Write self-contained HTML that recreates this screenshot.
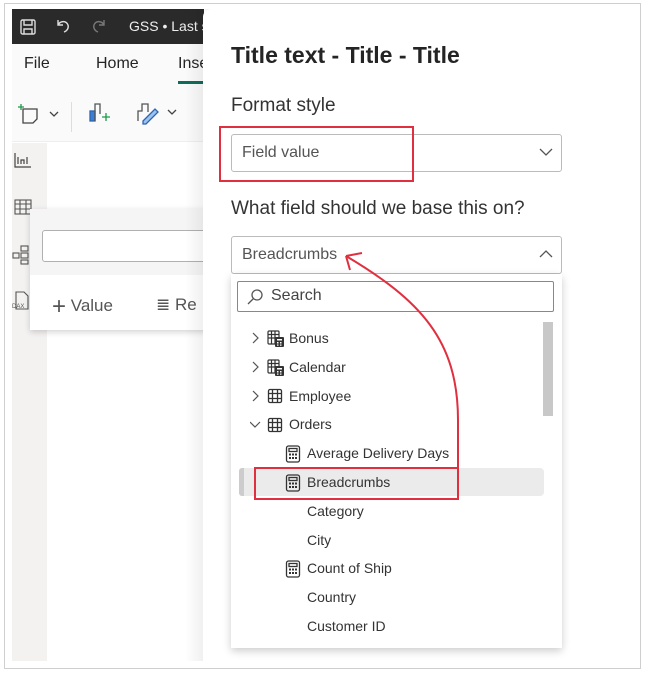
<!DOCTYPE html>
<html><head><meta charset="utf-8"><style>
*{box-sizing:border-box;margin:0;padding:0}
body{width:645px;height:673px;background:#fff;position:relative;overflow:hidden;font-family:"Segoe UI","Liberation Sans",sans-serif;color:#242424}
.a{position:absolute}
.t{white-space:nowrap}
</style></head><body>
<svg width="0" height="0" style="position:absolute"><defs>
<symbol id="calc" viewBox="0 0 16 18"><g fill="none" stroke="#333" stroke-width="1.3"><rect x="1.5" y="1" width="13" height="16" rx="2"/><rect x="4" y="3.5" width="8" height="3"/></g><g fill="#333"><rect x="4" y="8.5" width="2" height="2"/><rect x="7" y="8.5" width="2" height="2"/><rect x="10" y="8.5" width="2" height="2"/><rect x="4" y="12" width="2" height="2"/><rect x="7" y="12" width="2" height="2"/><rect x="10" y="12" width="2" height="2"/></g></symbol>
<symbol id="tbl" viewBox="0 0 16 16"><g fill="none" stroke="#333" stroke-width="1.3"><rect x="1.5" y="1.5" width="13" height="13" rx="1.5"/><path d="M1.5 5.5h13M5.5 1.5v13M10.5 1.5v13M1.5 10.5h13"/></g></symbol>
<symbol id="ctbl" viewBox="0 0 18 18"><g fill="none" stroke="#333" stroke-width="1.2"><rect x="1" y="1" width="11" height="13" rx="1"/><path d="M1 4.5h11M4.5 1v13M8 1v13M1 8h11"/></g><rect x="8" y="7" width="9" height="10" rx="1" fill="#333"/><g fill="#fff"><rect x="10" y="9" width="5" height="1.5"/><rect x="10" y="12" width="1.5" height="1.5"/><rect x="13" y="12" width="1.5" height="1.5"/><rect x="10" y="14.5" width="1.5" height="1.2"/><rect x="13" y="14.5" width="1.5" height="1.2"/></g></symbol>
</defs></svg>
<div class="a" style="left:4px;top:3px;width:637px;height:666px;border:1px solid #cfcfcf"></div>
<div class="a" style="left:12px;top:9px;width:192px;height:652px;background:#fff;overflow:hidden">
  <div class="a" style="left:0;top:0;width:192px;height:35px;background:#2a2a2a"></div>
  <svg class="a" style="left:6px;top:8px" width="20" height="20" viewBox="0 0 20 20" fill="none" stroke="#ddd" stroke-width="1.4"><rect x="3" y="3" width="14" height="14" rx="1.5"/><path d="M6 3v5h8V3M6 17v-5h8v5"/></svg>
  <svg class="a" style="left:42px;top:8px" width="18" height="18" viewBox="0 0 18 18" fill="none" stroke="#ddd" stroke-width="1.4"><path d="M4 3v5h5M4 8c2-4 8-5 10 0 1 3-1 6-4 7"/></svg>
  <svg class="a" style="left:78px;top:8px" width="18" height="18" viewBox="0 0 18 18" fill="none" stroke="#777" stroke-width="1.4"><path d="M14 3v5H9M14 8c-2-4-8-5-10 0-1 3 1 6 4 7"/></svg>
  <div class="a t" style="left:117px;top:9px;font-size:14px;color:#eee">GSS • Last s</div>
  <div class="a" style="left:0;top:35px;width:192px;height:46px;background:#fafafa"></div>
  <div class="a t" style="left:12px;top:46px;font-size:16px">File</div>
  <div class="a t" style="left:84px;top:46px;font-size:16px">Home</div>
  <div class="a t" style="left:166px;top:46px;font-size:16px">Inse</div>
  <div class="a" style="left:166px;top:72px;width:30px;height:3px;background:#0f6c5a"></div>
  <div class="a" style="left:0;top:81px;width:192px;height:52px;background:#fafafa;border-bottom:1px solid #eee"></div>
  <svg class="a" style="left:6px;top:94px" width="50" height="22" viewBox="0 0 50 22" fill="none" stroke-width="1.3"><path d="M5 6h14v10l-4 4H5z" stroke="#444"/><path d="M3 1v6M0 4h6" stroke="#1a9b4b"/><path d="M32 9l4 4 4-4" stroke="#444"/></svg>
  <div class="a" style="left:59px;top:93px;width:1px;height:30px;background:#ddd"></div>
  <svg class="a" style="left:75px;top:92px" width="30" height="24" viewBox="0 0 30 24" fill="none" stroke-width="1.3"><rect x="3" y="10" width="5" height="10" fill="#3b7fd6" stroke="#2d65b0"/><path d="M8 20V3h5v10" stroke="#555"/><path d="M15 16h8M19 12v8" stroke="#1a9b4b"/></svg>
  <svg class="a" style="left:122px;top:92px" width="46" height="24" viewBox="0 0 46 24" fill="none" stroke-width="1.3"><path d="M4 20V10h4V3h6v8" stroke="#555"/><path d="M9 20l12-12 3 3-12 12H9z" fill="#9cc3ee" stroke="#2d65b0"/><path d="M34 9l4 4 4-4" stroke="#444"/></svg>
  <div class="a" style="left:0;top:134px;width:35px;height:518px;background:#f3f2f1"></div>
  <svg class="a" style="left:2px;top:143px" width="18" height="16" viewBox="0 0 18 16" fill="none" stroke="#444" stroke-width="1.2"><path d="M1 1v14h16M4 12V5M7 12V8h3v4M13 12V5"/></svg>
  <svg class="a" style="left:2px;top:190px" width="18" height="16" viewBox="0 0 18 16" fill="none" stroke="#555" stroke-width="1.1"><rect x="1" y="1" width="16" height="14"/><path d="M1 5h16M1 10h16M6 1v14M12 1v14"/></svg>
  <svg class="a" style="left:0px;top:236px" width="18" height="20" viewBox="0 0 18 20" fill="none" stroke="#555" stroke-width="1.1"><rect x="9" y="1" width="7" height="5"/><rect x="9" y="8" width="7" height="5"/><rect x="9" y="15" width="7" height="4"/><rect x="1" y="8" width="6" height="5"/></svg>
  <div class="a t" style="left:0;top:295px;font-size:6px;color:#555">DAX</div>
  <svg class="a" style="left:3px;top:282px" width="14" height="20" viewBox="0 0 14 20" fill="none" stroke="#555" stroke-width="1.1"><path d="M1 1h8l4 4v13H1z"/></svg>
  <div class="a" style="left:18px;top:200px;width:180px;height:121px;background:#fff;box-shadow:0 2px 6px rgba(0,0,0,.18)">
    <div class="a" style="left:0;top:0;width:180px;height:66px;background:#f5f5f5"></div>
    <div class="a" style="left:12px;top:21px;width:170px;height:32px;background:#fff;border:1px solid #b0b0b0;border-radius:3px"></div>
    <div class="a t" style="left:22px;top:84px;font-size:17px;color:#555"><span style="font-size:24px;font-weight:300;vertical-align:-3px">+</span> Value</div>
    <div class="a t" style="left:126px;top:86px;font-size:17px;color:#555">≣ Re</div>
  </div>
</div>
<div class="a" style="left:203px;top:9px;width:8px;height:652px;background:linear-gradient(to left,rgba(0,0,0,.12),rgba(0,0,0,0))"></div>
<div class="a" style="left:185px;top:9px;width:18px;height:652px;background:linear-gradient(to left,rgba(0,0,0,.06),rgba(0,0,0,0))"></div>
<div class="a" style="left:203px;top:9px;width:437px;height:652px;background:#fff;border-radius:8px 0 0 0"></div>
<div class="a t" style="left:231px;top:42px;font-size:23px;font-weight:bold">Title text - Title - Title</div>
<div class="a t" style="left:231px;top:95px;font-size:19px;color:#333">Format style</div>
<div class="a" style="left:231px;top:134px;width:331px;height:38px;border:1px solid #bbb;border-radius:3px"></div>
<div class="a t" style="left:242px;top:144px;font-size:16px;color:#555">Field value</div>
<svg class="a" style="left:538px;top:146px" width="16" height="12" viewBox="0 0 16 12" fill="none" stroke="#555" stroke-width="1.3"><path d="M2 3l6 6 6-6"/></svg>
<div class="a" style="left:219px;top:126px;width:195px;height:56px;border:2px solid #e03040"></div>
<div class="a t" style="left:231px;top:198px;font-size:19px;color:#333">What field should we base this on?</div>
<div class="a" style="left:231px;top:236px;width:331px;height:38px;border:1px solid #bbb;border-radius:3px"></div>
<div class="a t" style="left:242px;top:246px;font-size:16px;color:#555">Breadcrumbs</div>
<svg class="a" style="left:538px;top:248px" width="16" height="12" viewBox="0 0 16 12" fill="none" stroke="#555" stroke-width="1.3"><path d="M2 9l6-6 6 6"/></svg>
<div class="a" style="left:231px;top:274px;width:331px;height:374px;background:#fff;box-shadow:0 3px 8px rgba(0,0,0,.2)"></div>
<div class="a" style="left:237px;top:281px;width:317px;height:31px;border:1px solid #888;border-radius:2px"></div>
<svg class="a" style="left:246px;top:288px" width="18" height="18" viewBox="0 0 18 18" fill="none" stroke="#555" stroke-width="1.3"><circle cx="11" cy="7" r="5"/><path d="M7 11l-5 5"/></svg>
<div class="a t" style="left:271px;top:287px;font-size:16px;color:#444">Search</div>
<div class="a" style="left:543px;top:322px;width:10px;height:94px;background:#c8c8c8"></div>
<div class="a" style="left:239px;top:468px;width:305px;height:28px;background:#ebebeb;border-radius:4px"></div>
<div class="a" style="left:239px;top:468px;width:5px;height:28px;background:#ccc;border-radius:3px 0 0 3px"></div>
<div class="a" style="font-size:14px;color:#333;left:0;top:0">
<svg class="a" style="left:250px;top:332px" width="12" height="100" viewBox="0 0 12 100" fill="none" stroke="#555" stroke-width="1.2"><path d="M3 1l5 5-5 5M3 30l5 5-5 5M3 59l5 5-5 5M0 90l5 5 5-5"/></svg>
<svg class="a" style="left:267px;top:330px" width="18" height="18"><use href="#ctbl"/></svg>
<div class="a t" style="left:289px;top:330px">Bonus</div>
<svg class="a" style="left:267px;top:359px" width="18" height="18"><use href="#ctbl"/></svg>
<div class="a t" style="left:289px;top:359px">Calendar</div>
<svg class="a" style="left:267px;top:388px" width="16" height="16"><use href="#tbl"/></svg>
<div class="a t" style="left:289px;top:388px">Employee</div>
<svg class="a" style="left:267px;top:417px" width="16" height="16"><use href="#tbl"/></svg>
<div class="a t" style="left:289px;top:416px">Orders</div>
<svg class="a" style="left:285px;top:445px" width="16" height="18"><use href="#calc"/></svg>
<div class="a t" style="left:307px;top:445px">Average Delivery Days</div>
<svg class="a" style="left:285px;top:474px" width="16" height="18"><use href="#calc"/></svg>
<div class="a t" style="left:307px;top:474px">Breadcrumbs</div>
<div class="a t" style="left:307px;top:503px">Category</div>
<div class="a t" style="left:307px;top:532px">City</div>
<svg class="a" style="left:285px;top:560px" width="16" height="18"><use href="#calc"/></svg>
<div class="a t" style="left:307px;top:560px">Count of Ship</div>
<div class="a t" style="left:307px;top:589px">Country</div>
<div class="a t" style="left:307px;top:618px">Customer ID</div>
</div>
<div class="a" style="left:254px;top:467px;width:205px;height:33px;border:2px solid #e03040"></div>
<svg class="a" style="left:0;top:0" width="645" height="673" fill="none" stroke="#e03040" stroke-width="2"><path d="M458 498V420C458 340 420 300 346 256"/><path d="M346 256l16 -3M346 256l4 14"/></svg>
</body></html>
